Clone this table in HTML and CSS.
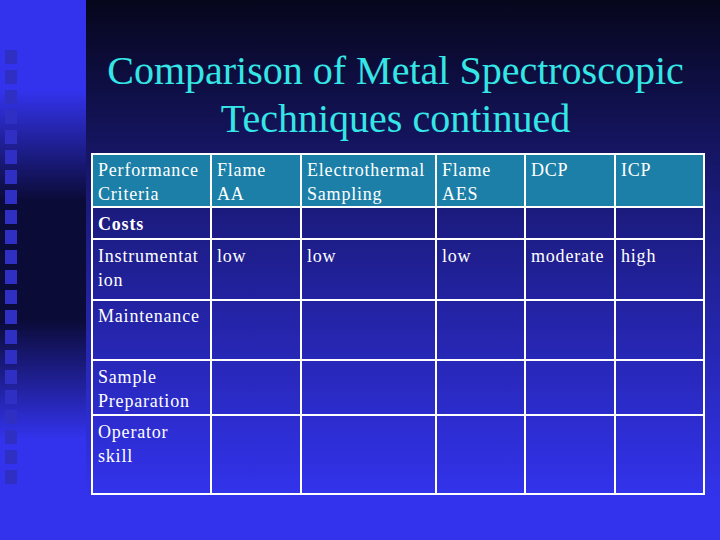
FILE: index.html
```html
<!DOCTYPE html>
<html>
<head>
<meta charset="utf-8">
<link rel="stylesheet" href="styles.css">
</head>
<body>
<div class="slide">
  <div class="strip">
    <div class="squares">
      <span></span><span></span><span></span><span></span><span></span><span></span>
      <span></span><span></span><span></span><span></span><span></span><span></span>
      <span></span><span></span><span></span><span></span><span></span><span></span>
      <span></span><span></span><span></span><span></span>
    </div>
  </div>
  <main class="main">
    <h1 class="title">Comparison of Metal Spectroscopic<br>Techniques continued</h1>
    <table class="grid">
      <colgroup>
        <col class="c1"><col class="c2"><col class="c3"><col class="c4"><col class="c5"><col class="c6">
      </colgroup>
      <tr class="head">
        <td>Performance Criteria</td>
        <td>Flame AA</td>
        <td>Electrothermal Sampling</td>
        <td>Flame AES</td>
        <td>DCP</td>
        <td>ICP</td>
      </tr>
      <tr class="r-costs">
        <td class="bold">Costs</td><td></td><td></td><td></td><td></td><td></td>
      </tr>
      <tr class="r-inst">
        <td>Instrumentat<wbr>ion</td><td>low</td><td>low</td><td>low</td><td>moderate</td><td>high</td>
      </tr>
      <tr class="r-maint">
        <td>Maintenance</td><td></td><td></td><td></td><td></td><td></td>
      </tr>
      <tr class="r-sample">
        <td>Sample Preparation</td><td></td><td></td><td></td><td></td><td></td>
      </tr>
      <tr class="r-op">
        <td>Operator skill</td><td></td><td></td><td></td><td></td><td></td>
      </tr>
    </table>
  </main>
</div>
</body>
</html>
```

FILE: styles.css
```css
html, body {
  margin: 0;
  padding: 0;
}
body {
  width: 720px;
  height: 540px;
  overflow: hidden;
  font-family: 'Liberation Serif', 'Times New Roman', Times, 'DejaVu Serif', serif;
}
.slide {
  display: flex;
  width: 720px;
  height: 540px;
}
.strip {
  width: 86px;
  flex: none;
  background: linear-gradient(180deg, #3333ee 0px, #3333ee 90px, #0b0b38 200px, #0b0b38 320px, #3333ee 440px, #3333ee 540px);
}
.squares {
  display: flex;
  flex-direction: column;
  gap: 6px;
  padding: 50px 0 0 5px;
}
.squares span {
  display: block;
  width: 12px;
  height: 14px;
  background: #2f2fc4;
}
.main {
  flex: 1;
  padding: 47px 15px 0 5px;
  background: linear-gradient(180deg, #06061c 0px, #1a1a7a 200px, #3333ee 500px, #3333ee 540px);
}
.title {
  margin: 0;
  padding-right: 5px;
  font-family: 'Liberation Serif', 'Times New Roman', Times, 'DejaVu Serif', serif;
  font-weight: normal;
  font-size: 40px;
  line-height: 48px;
  color: #35e6e6;
  text-align: center;
}
.grid {
  margin-top: 10px;
  table-layout: fixed;
  width: 614px;
  border-collapse: separate;
  border-spacing: 0;
  border-left: 2px solid #fff;
  border-top: 2px solid #fff;
  color: #fff;
  font-family: 'Liberation Serif', 'Times New Roman', Times, 'DejaVu Serif', serif;
  font-size: 18px;
  line-height: 24px;
  letter-spacing: 0.8px;
}
.c1 { width: 119px; }
.c2 { width: 90px; }
.c3 { width: 135px; }
.c4 { width: 89px; }
.c5 { width: 90px; }
.c6 { width: 89px; }
.grid td {
  border-right: 2px solid #fff;
  border-bottom: 2px solid #fff;
  padding: 4px 4px 0 5px;
  vertical-align: top;
}
.head td {
  background: #1c7fa8;
  padding-top: 3px;
}
.head { height: 53px; }
.r-costs { height: 32px; }
.r-inst { height: 61px; }
.r-maint { height: 60px; }
.r-maint td { padding-top: 3px; }
.r-sample { height: 55px; }
.r-op { height: 79px; }
.bold { font-weight: bold; }
```
